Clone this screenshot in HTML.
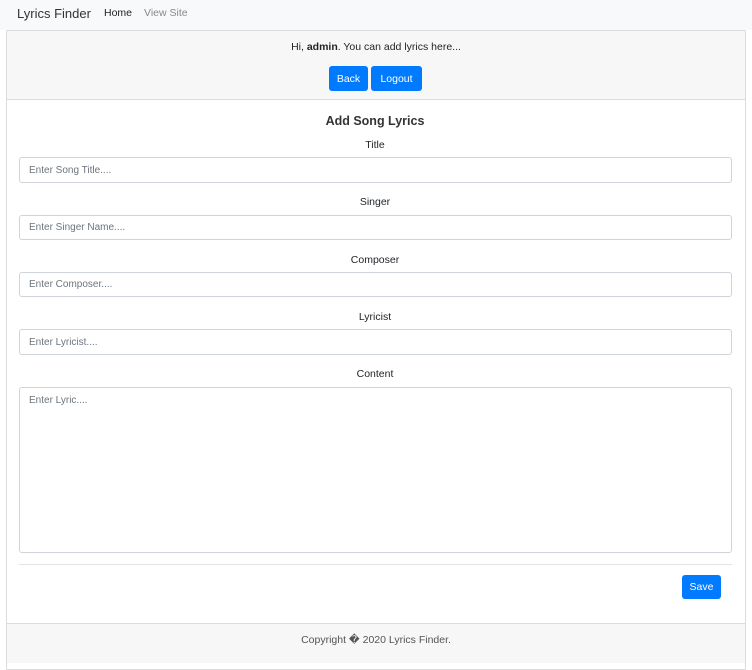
<!DOCTYPE html>
<html><head><meta charset="utf-8"><style>
*{box-sizing:border-box;margin:0;padding:0}
body{width:752px;height:650px;overflow:hidden;background:#fff;font-family:"Liberation Sans",sans-serif;font-size:10.5px;color:#212529;position:relative}
.a{position:absolute}
.nav{left:0;top:0;width:752px;height:30px;background:#f8f9fa}
.card{left:6px;top:30px;width:740px;height:640px;border:1px solid #dcdcdc}
.hdr{left:7px;top:31px;width:738px;height:69px;background:#f7f7f7;border-bottom:1px solid #dcdcdc}
.btn{background:#007bff;color:#fff;border-radius:3px;text-align:center;font-size:10.5px}
.lbl{left:19px;width:712px;text-align:center;font-size:10.5px}
.inp{left:19px;width:713px;border:1px solid #ced4da;border-radius:3px;color:#6c757d;padding-left:9px;font-size:10px}
.ftr{left:7px;top:623px;width:738px;height:40px;background:#f7f7f7;border-top:1px solid #dcdcdc;text-align:center;color:#555;padding-top:10px}
</style></head><body>
<div class="a nav"></div>
<div class="a" style="left:17px;top:6px;font-size:13px;color:#333">Lyrics Finder</div>
<div class="a" style="left:104px;top:7px;font-size:10.5px;color:#222">Home</div>
<div class="a" style="left:144px;top:7px;font-size:10.5px;color:#888">View Site</div>
<div class="a card"></div>
<div class="a hdr"></div>
<div class="a" style="left:7px;top:41px;width:738px;text-align:center">Hi, <b>admin</b>. You can add lyrics here...</div>
<div class="a btn" style="left:329px;top:66px;width:39px;height:25px;line-height:26px">Back</div>
<div class="a btn" style="left:371px;top:66px;width:51px;height:25px;line-height:26px">Logout</div>
<div class="a lbl" style="top:114px;font-size:12.5px;font-weight:bold;color:#333">Add Song Lyrics</div>
<div class="a lbl" style="top:139px">Title</div>
<div class="a inp" style="top:157px;height:26px;line-height:25px">Enter Song Title....</div>
<div class="a lbl" style="top:196px">Singer</div>
<div class="a inp" style="top:215px;height:25px;line-height:24px">Enter Singer Name....</div>
<div class="a lbl" style="top:254px">Composer</div>
<div class="a inp" style="top:272px;height:25px;line-height:24px">Enter Composer....</div>
<div class="a lbl" style="top:311px">Lyricist</div>
<div class="a inp" style="top:329px;height:26px;line-height:25px">Enter Lyricist....</div>
<div class="a lbl" style="top:368px">Content</div>
<div class="a inp" style="top:387px;height:166px;padding-top:7px">Enter Lyric....</div>
<div class="a" style="left:19px;top:564px;width:713px;border-top:1px solid #e3e3e3"></div>
<div class="a btn" style="left:682px;top:575px;width:39px;height:24px;line-height:25px">Save</div>
<div class="a ftr">Copyright � 2020 Lyrics Finder.</div>
</body></html>
